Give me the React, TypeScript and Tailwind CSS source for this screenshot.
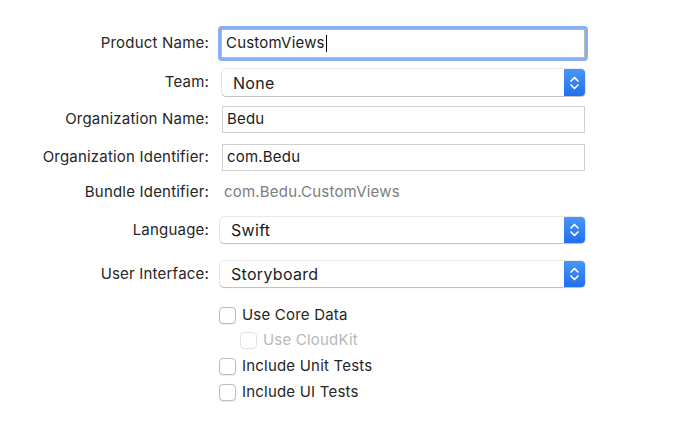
import React from 'react';

const font = { fontFamily: 'Inter, "Liberation Sans", sans-serif' };

const Label = ({ children }: { children: React.ReactNode }) => (
  <div className="w-[209px] shrink-0 text-right text-[15px] tracking-[0.2px] text-[#262626]">{children}</div>
);

const Stepper = () => (
  <div className="w-[21px] h-full rounded-r-[4px] bg-gradient-to-b from-[#4a95f8] to-[#1f6ff0] flex items-center justify-center">
    <svg width="11" height="18" viewBox="0 0 11 18" fill="none" stroke="white" strokeWidth="1.7" strokeLinecap="round" strokeLinejoin="round">
      <path d="M2 7 L5.5 3.5 L9 7" />
      <path d="M2 11 L5.5 14.5 L9 11" />
    </svg>
  </div>
);

const Popup = ({ value, className }: { value: string; className?: string }) => (
  <div className={`h-full flex items-stretch rounded-[4px] bg-white shadow-[0_0_0_0.5px_rgba(0,0,0,0.18),0_1px_1px_rgba(0,0,0,0.18)] ${className ?? ''}`}>
    <div className="flex-1 flex items-center pl-[11px] text-[16px] tracking-[0.3px] text-[#1c1c1c]">{value}</div>
    <Stepper />
  </div>
);

const TextField = ({ value }: { value: string }) => (
  <div className="ml-[13px] w-[363px] h-full flex items-center pl-[4px] bg-white border border-[#d0d0d0] text-[15px] tracking-[0.2px] text-[#1c1c1c]">
    {value}
  </div>
);

const Check = ({ label, disabled }: { label: string; disabled?: boolean }) => (
  <div className="flex items-center gap-[6px] h-[18px]">
    <div
      className={`w-[17px] h-[17px] rounded-[4px] bg-white border ${
        disabled ? 'border-[#e2e2e2]' : 'border-[#bdbdbd] shadow-[0_0.5px_1px_rgba(0,0,0,0.08)]'
      }`}
    />
    <span className={`text-[15px] tracking-[0.2px] ${disabled ? 'text-[#b8b8b8]' : 'text-[#262626]'}`}>{label}</span>
  </div>
);

export default function App() {
  return (
    <div className="w-[700px] h-[437px] bg-white pt-[26px]" style={font}>
      <div className="flex items-center h-[35px]">
        <Label>Product Name:</Label>
        <div className="ml-[9px] w-[370px] h-full rounded-[4px] border-[3px] border-[#88b0f1] p-0">
          <div className="h-full flex items-center pl-[4px] bg-white border border-[#b8b8b8] text-[15px] tracking-[0.2px] text-[#1c1c1c]">
            CustomViews
            <span className="ml-[1px] w-px h-[17px] bg-black" />
          </div>
        </div>
      </div>

      <div className="flex items-center h-[27px] mt-[8px]">
        <Label>Team:</Label>
        <Popup value="None" className="ml-[13px] w-[363px]" />
      </div>

      <div className="flex items-center h-[27px] mt-[10px]">
        <Label>Organization Name:</Label>
        <TextField value="Bedu" />
      </div>

      <div className="flex items-center h-[27px] mt-[11px]">
        <Label>Organization Identifier:</Label>
        <TextField value="com.Bedu" />
      </div>

      <div className="flex items-center h-[24px] mt-[9px]">
        <Label>Bundle Identifier:</Label>
        <div className="ml-[15px] text-[15px] tracking-[0.2px] text-[#7d7d7d]">com.Bedu.CustomViews</div>
      </div>

      <div className="flex items-center h-[26px] mt-[13px]">
        <Label>Language:</Label>
        <Popup value="Swift" className="ml-[11px] w-[365px]" />
      </div>

      <div className="flex items-center h-[26px] mt-[18px]">
        <Label>User Interface:</Label>
        <Popup value="Storyboard" className="ml-[11px] w-[365px]" />
      </div>

      <div className="ml-[219px] mt-[19px] flex flex-col gap-[7.7px]">
        <Check label="Use Core Data" />
        <div className="ml-[21px]">
          <Check label="Use CloudKit" disabled />
        </div>
        <Check label="Include Unit Tests" />
        <Check label="Include UI Tests" />
      </div>
    </div>
  );
}
